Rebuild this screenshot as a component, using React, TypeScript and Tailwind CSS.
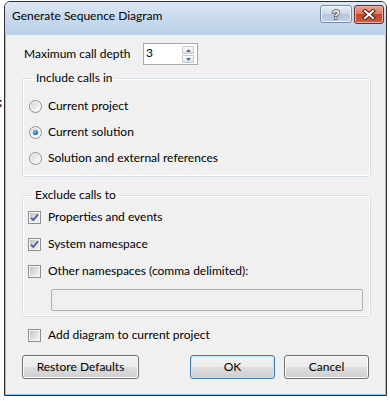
import React from 'react';

const FONT = "font-['Lato','Open_Sans',sans-serif]";

const Radio = ({ checked }: { checked?: boolean }) => (
  <span className="flex h-[13px] w-[13px] shrink-0 items-center justify-center rounded-full border border-[#8b9196] bg-[linear-gradient(135deg,#cfd2d5_0%,#f4f4f4_70%,#ffffff_100%)] shadow-[inset_0_0_0_1px_#f6f6f6]">
    {checked && (
      <span className="h-[5px] w-[5px] rounded-full bg-[radial-gradient(circle_at_40%_35%,#7cc7ee_0%,#1c6ab0_60%,#0c3f78_100%)]" />
    )}
  </span>
);

const Check = ({ checked }: { checked?: boolean }) => (
  <span className="flex h-[13px] w-[13px] shrink-0 items-center justify-center border border-[#8e8f8f] bg-[linear-gradient(135deg,#b9bdc2_0%,#e4e5e7_60%,#f5f5f6_100%)] shadow-[inset_0_0_0_1px_#f4f4f4]">
    {checked && (
      <svg width="11" height="11" viewBox="0 0 11 11">
        <path d="M2 5.6 L4.3 8 L9 2.4" fill="none" stroke="#46599a" strokeWidth="1.7" />
      </svg>
    )}
  </span>
);

const SpinBtn = ({ up }: { up?: boolean }) => (
  <span className="flex h-[8px] w-[12px] items-center justify-center rounded-[1px] border border-[#c4c8cc] bg-[linear-gradient(#fbfbfb,#e3e5e8)]">
    <svg width="5" height="3" viewBox="0 0 5 3">
      <path d={up ? 'M0 3 L2.5 0 L5 3 Z' : 'M0 0 L2.5 3 L5 0 Z'} fill="#4f6b98" />
    </svg>
  </span>
);

const Button = ({ label, width, primary }: { label: string; width: string; primary?: boolean }) => (
  <button
    className={
      primary
        ? `flex h-[24px] ${width} items-center justify-center rounded-[3px] border border-[#3c7fb1] bg-[linear-gradient(#f2f2f2_0%,#ebebeb_50%,#dddddd_50%,#cfcfcf_100%)] text-[12px] shadow-[inset_0_0_0_1px_#bfe8fb]`
        : `flex h-[24px] ${width} items-center justify-center rounded-[3px] border border-[#707070] bg-[linear-gradient(#f2f2f2_0%,#ebebeb_50%,#dddddd_50%,#cfcfcf_100%)] text-[12px] shadow-[inset_0_0_0_1px_#fbfbfb]`
    }
  >
    {label}
  </button>
);

export default function App() {
  return (
    <div className={`flex h-[401px] w-[390px] bg-white text-[12px] text-black ${FONT}`}>
      <div className="w-[4px] overflow-hidden pt-[96px] text-[12px] font-bold leading-none">
        <span className="-ml-[1px]">;</span>
      </div>

      <div className="mt-[1px] flex h-[395px] w-[383px] flex-col overflow-hidden rounded-t-[6px] border border-[#2e2e2e]">
        <div className="flex h-[33px] shrink-0 items-start justify-between bg-[linear-gradient(#dce7f4,#c4d7ec_60%,#bad0e8)] pl-[7px] pr-[2px]">
          <span className="mt-[6px] leading-[16px] text-[#000]">Generate Sequence Diagram</span>
          <div className="mt-[3px] flex gap-[2px]">
            <span className="flex h-[18px] w-[32px] items-center justify-center rounded-[3px] border border-[#7b8ba5] bg-[linear-gradient(#e4ecf5_0%,#cdd9e8_50%,#b3c4da_50%,#c3d3e6_100%)] shadow-[inset_0_0_0_1px_#eef3f9]">
              <svg width="12" height="14" viewBox="0 0 12 14">
                <text x="6" y="12" textAnchor="middle" fontSize="13" fontWeight="bold" fontFamily="'Liberation Sans',sans-serif" fill="#f4f6f9" stroke="#46546b" strokeWidth="1.6" paintOrder="stroke">?</text>
              </svg>
            </span>
            <span className="flex h-[19px] w-[30px] items-center justify-center rounded-[3px] border border-[#6e2a22] bg-[linear-gradient(#e6a495_0%,#d77e6a_45%,#c2442b_50%,#cf5e3f_100%)] shadow-[inset_0_0_0_1px_#e9b3a6]">
              <svg width="14" height="11" viewBox="0 0 14 11">
                <path d="M3 2 L11 9 M11 2 L3 9" stroke="#4a1d17" strokeWidth="4" strokeLinecap="square" />
                <path d="M3 2 L11 9 M11 2 L3 9" stroke="#ffffff" strokeWidth="2" strokeLinecap="square" />
              </svg>
            </span>
          </div>
        </div>

        <div className="flex flex-1 flex-col border-x border-b border-[#86c9ef] bg-[#f0f0f0]">
          <div className="mt-[8px] flex h-[22px] items-center pl-[18px]">
            <span className="w-[119px] leading-[16px]">Maximum call depth</span>
            <div className="flex h-[22px] w-[55px] items-start border border-[#a9a9a9] bg-white pl-[2px]">
              <span className="flex-1 pt-[1px] text-[12px] leading-[15px]">3</span>
              <div className="mr-[3px] mt-[2px] flex flex-col gap-[1px]">
                <SpinBtn up />
                <SpinBtn />
              </div>
            </div>
          </div>

          <fieldset className="ml-[16px] mt-[5px] w-[349px] rounded-[3px] border border-[#d5dfe5] pb-[10px] pl-[6px] shadow-[inset_0_0_0_1px_#ffffff]">
            <legend className="ml-[3px] pl-[4px] pr-[2px] leading-[16px]">Include calls in</legend>
            <div className="flex flex-col gap-[10px] pt-[12px]">
              <label className="flex h-[16px] items-center gap-[6px] leading-[16px]">
                <Radio />
                <span>Current project</span>
              </label>
              <label className="flex h-[16px] items-center gap-[6px] leading-[16px]">
                <Radio checked />
                <span>Current solution</span>
              </label>
              <label className="flex h-[16px] items-center gap-[6px] leading-[16px]">
                <Radio />
                <span>Solution and external references</span>
              </label>
            </div>
          </fieldset>

          <fieldset className="ml-[16px] mt-[10px] w-[349px] rounded-[3px] border border-[#d5dfe5] pb-[5px] pl-[5px] shadow-[inset_0_0_0_1px_#ffffff]">
            <legend className="ml-[3px] pl-[4px] pr-[2px] leading-[16px]">Exclude calls to</legend>
            <div className="flex flex-col gap-[11px] pt-[6px]">
              <label className="flex h-[16px] items-center gap-[7px] leading-[16px]">
                <Check checked />
                <span>Properties and events</span>
              </label>
              <label className="flex h-[16px] items-center gap-[7px] leading-[16px]">
                <Check checked />
                <span>System namespace</span>
              </label>
              <label className="flex h-[16px] items-center gap-[7px] leading-[16px]">
                <Check />
                <span>Other namespaces (comma delimited):</span>
              </label>
            </div>
            <div className="ml-[23px] mt-[10px] h-[22px] w-[312px] rounded-[2px] border border-[#b0b0b0] bg-[#f0f0f0]" />
          </fieldset>

          <label className="mt-[10px] flex h-[16px] items-center gap-[7px] pl-[22px] leading-[16px]">
            <Check />
            <span>Add diagram to current project</span>
          </label>

          <div className="mt-[12px] flex pl-[16px]">
            <Button label="Restore Defaults" width="w-[117px]" />
            <div className="ml-[51px] flex gap-[9px]">
              <Button label="OK" width="w-[85px]" primary />
              <Button label="Cancel" width="w-[85px]" />
            </div>
          </div>
        </div>
      </div>
    </div>
  );
}
